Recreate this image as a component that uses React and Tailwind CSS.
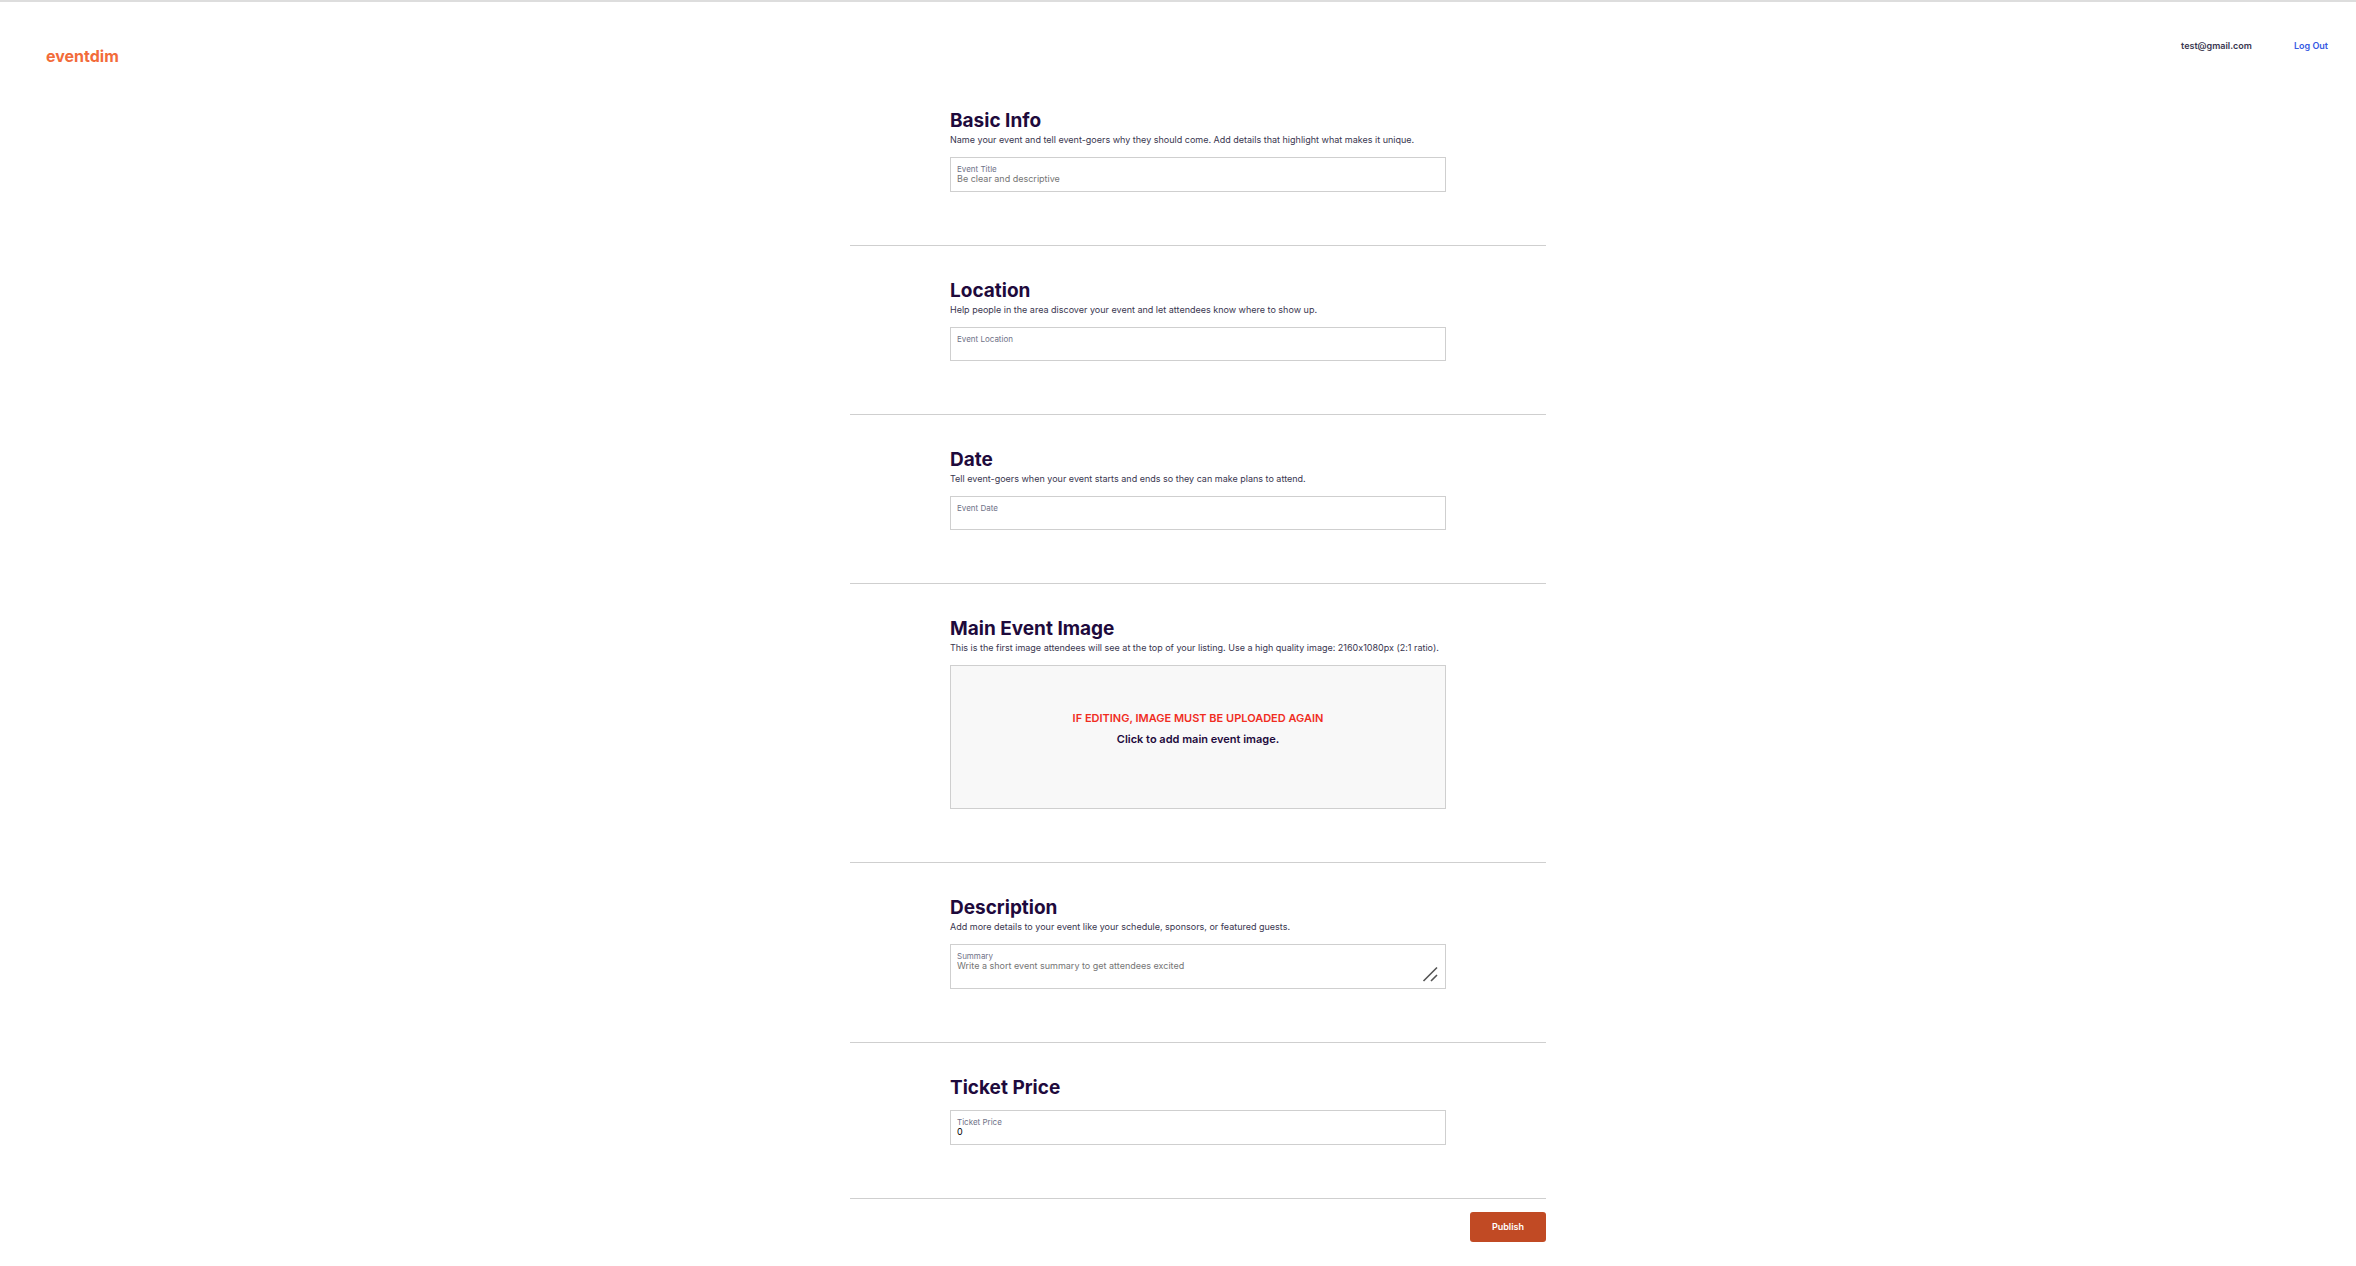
function Field({ id, label, tall, children }) {
  return (
    <div className={`relative flex flex-col border border-[#cfcfcf] px-[6px] pt-[6px] ${tall}`}>
      <label htmlFor={id} className="text-[8px] leading-[10px] text-[#6f7287]">
        {label}
      </label>
      {children}
    </div>
  );
}

function TextInput(props) {
  return (
    <input
      type="text"
      className="h-[10px] w-full bg-transparent p-0 text-[9px] leading-[10px] text-black outline-none placeholder:text-[#757575]"
      {...props}
    />
  );
}

function Section({ title, text, children }) {
  return (
    <section className="border-b border-[#cfcfcf] px-[100px] pt-[33px] pb-[53px]">
      <h2 className="text-[19px] leading-6 font-bold text-[#1e0a3c]">{title}</h2>
      {text ? (
        <p className="mb-[11px] text-[9px] leading-[13px] whitespace-nowrap text-[#39364f]">{text}</p>
      ) : (
        <div className="h-[10px]" />
      )}
      {children}
    </section>
  );
}

export default function App() {
  return (
    <div className="min-h-screen border-t-2 border-[#dddddd] bg-white font-['Inter',sans-serif] [font-feature-settings:'calt'_0]">
      <header className="flex h-[74px] items-start justify-between pr-7 pl-[46px]">
        <a href="#home" className="mt-[42px] text-[16px] leading-6 font-bold text-[#f26b3a]">
          eventdim
        </a>
        <nav className="mt-9 flex gap-[42px] text-[9px] leading-4 font-semibold">
          <a href="#account" className="text-[#39364f]">test@gmail.com</a>
          <a href="#logout" className="text-[#3659e3]">Log Out</a>
        </nav>
      </header>

      <main className="flex justify-center pl-10">
        <form className="w-full max-w-[696px]" onSubmit={(e) => e.preventDefault()}>
          <Section
            title="Basic Info"
            text="Name your event and tell event-goers why they should come. Add details that highlight what makes it unique."
          >
            <Field id="title" label="Event Title" tall="h-[35px]">
              <TextInput id="title" placeholder="Be clear and descriptive" />
            </Field>
          </Section>

          <Section
            title="Location"
            text="Help people in the area discover your event and let attendees know where to show up."
          >
            <Field id="location" label="Event Location" tall="h-[34px]">
              <TextInput id="location" />
            </Field>
          </Section>

          <Section
            title="Date"
            text="Tell event-goers when your event starts and ends so they can make plans to attend."
          >
            <Field id="date" label="Event Date" tall="h-[34px]">
              <TextInput id="date" />
            </Field>
          </Section>

          <Section
            title="Main Event Image"
            text="This is the first image attendees will see at the top of your listing. Use a high quality image: 2160x1080px (2:1 ratio)."
          >
            <button
              type="button"
              className="flex h-[144px] w-full flex-col items-center border border-[#cfcfcf] bg-[#f8f8f8] pt-[42px] text-[11px] leading-[21px] font-semibold text-[#1e0a3c]"
            >
              <span className="text-[#f02d1f]">IF EDITING, IMAGE MUST BE UPLOADED AGAIN</span>
              <span>Click to add main event image.</span>
            </button>
          </Section>

          <Section
            title="Description"
            text="Add more details to your event like your schedule, sponsors, or featured guests."
          >
            <Field id="summary" label="Summary" tall="h-[45px]">
              <textarea
                id="summary"
                placeholder="Write a short event summary to get attendees excited"
                className="h-5 w-full resize-none overflow-hidden bg-transparent p-0 text-[9px] leading-[10px] text-black outline-none placeholder:text-[#757575]"
              />
              <svg
                viewBox="0 0 16 16"
                className="pointer-events-none absolute right-[7px] bottom-[6px] size-4"
                fill="none"
                stroke="#555555"
                strokeWidth="1.6"
              >
                <path d="M1.5 15 15 1.5M9 15l6-6" />
              </svg>
            </Field>
          </Section>

          <Section title="Ticket Price">
            <Field id="price" label="Ticket Price" tall="h-[35px]">
              <TextInput id="price" defaultValue="0" />
            </Field>
          </Section>

          <div className="flex justify-end pt-[13px] pb-6">
            <button
              type="submit"
              className="h-[30px] w-[76px] rounded-[3px] bg-[#c14a24] text-[9px] font-semibold text-white"
            >
              Publish
            </button>
          </div>
        </form>
      </main>
    </div>
  );
}
